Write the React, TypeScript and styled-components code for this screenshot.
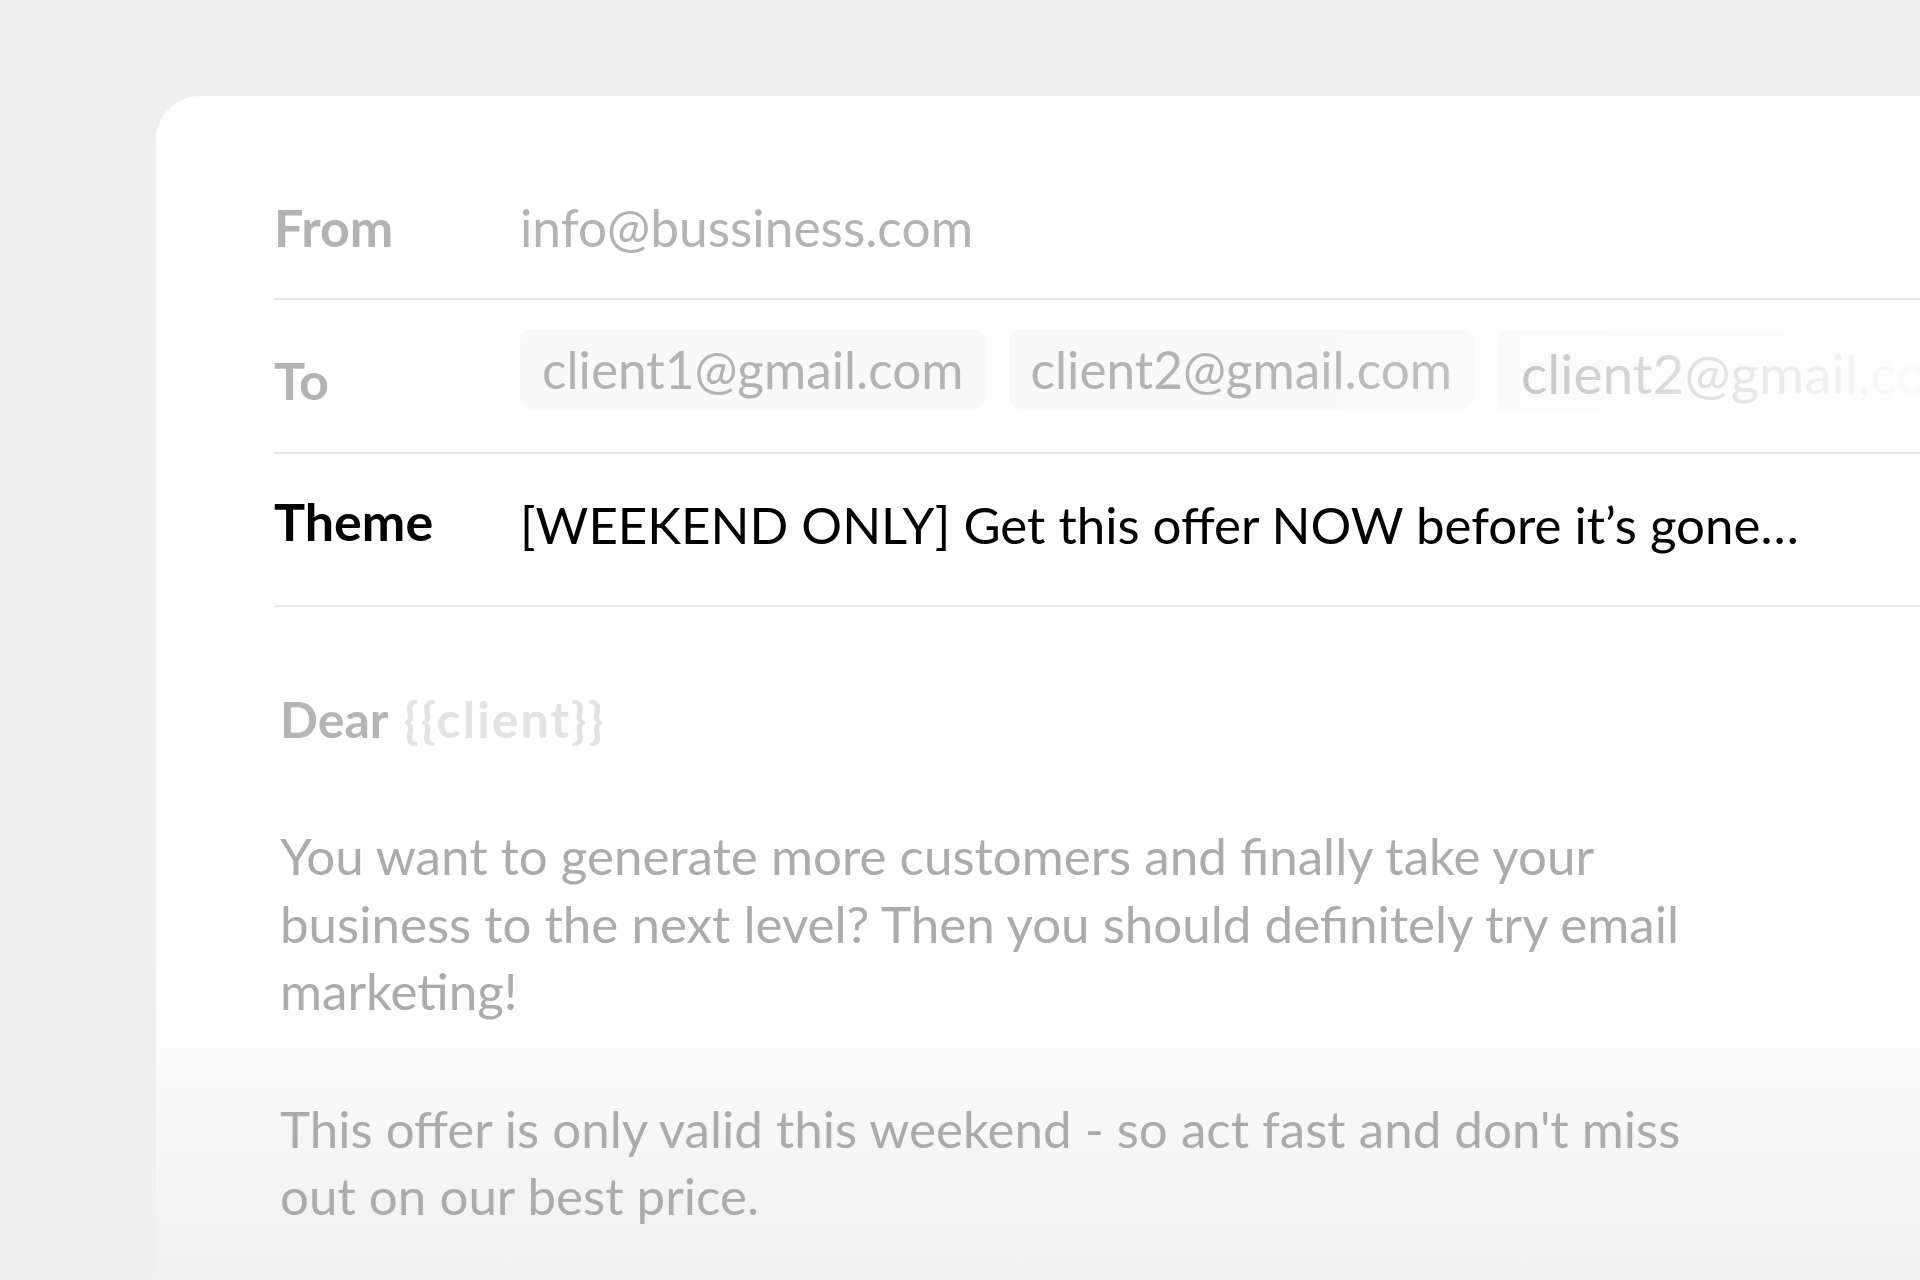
import React from "react";
import styled, { createGlobalStyle } from "styled-components";

const GlobalStyle = createGlobalStyle`
  html, body {
    margin: 0;
    padding: 0;
    background: #efefef;
    width: 1920px;
    height: 1280px;
    overflow: hidden;
  }
  * { box-sizing: border-box; }
`;

const Page = styled.div`
  width: 1920px;
  height: 1280px;
  overflow: hidden;
  background: #efefef;
  padding: 96px 0 0 156px;
  font-family: "Lato", "Liberation Sans", sans-serif;
`;

const Card = styled.div`
  width: 1900px;
  height: 1300px;
  border-radius: 44px 0 0 0;
  background: linear-gradient(180deg, #ffffff 0px, #ffffff 860px, #f0f0f0 1184px);
  padding: 0 0 0 118px;
`;

const Row = styled.div<{ $h: number; $pt: number }>`
  display: grid;
  grid-template-columns: 246px 1fr;
  align-items: start;
  height: ${(p) => p.$h}px;
  padding-top: ${(p) => p.$pt}px;
  border-bottom: 2px solid #e8e8e8;
`;

const Label = styled.div<{ $dark?: boolean; $shift?: number }>`
  font-size: 52px;
  line-height: 60px;
  font-weight: 700;
  color: ${(p) => (p.$dark ? "#000000" : "#b3b3b3")};
  margin-top: ${(p) => p.$shift ?? 0}px;
  white-space: nowrap;
`;

const Value = styled.div<{ $dark?: boolean }>`
  font-size: ${(p) => (p.$dark ? 51 : 51.5)}px;
  line-height: 60px;
  font-weight: 400;
  color: ${(p) => (p.$dark ? "#000000" : "#b3b3b3")};
  white-space: nowrap;
`;

const ChipList = styled.div`
  display: flex;
  align-items: flex-start;
  height: 80px;
  gap: 23px;
  white-space: nowrap;
  overflow: hidden;
  -webkit-mask-image: linear-gradient(
    to right,
    #000 0px,
    #000 720px,
    rgba(0, 0, 0, 0.78) 980px,
    rgba(0, 0, 0, 0.3) 1230px,
    rgba(0, 0, 0, 0.04) 1400px
  );
  mask-image: linear-gradient(
    to right,
    #000 0px,
    #000 720px,
    rgba(0, 0, 0, 0.78) 980px,
    rgba(0, 0, 0, 0.3) 1230px,
    rgba(0, 0, 0, 0.04) 1400px
  );
`;

const Chip = styled.div<{ $big?: boolean }>`
  flex: none;
  height: ${(p) => (p.$big ? 86 : 80)}px;
  line-height: ${(p) => (p.$big ? 86 : 80)}px;
  margin-top: ${(p) => (p.$big ? 1 : 0)}px;
  padding: 0 ${(p) => (p.$big ? 24 : 22)}px;
  border-radius: 12px;
  background: #f9f9f9;
  color: #b3b3b3;
  font-size: ${(p) => (p.$big ? 55 : 51.3)}px;
  font-weight: 400;
`;

const Body = styled.div`
  padding: 79px 0 0 6px;
  width: 1431px;
`;

const Greeting = styled.div`
  font-size: 50px;
  line-height: 67px;
  font-weight: 700;
  color: #b5b5b5;
  margin-bottom: 69px;
  white-space: nowrap;
`;

const Placeholder = styled.span`
  color: #e3e3e3;
  font-weight: 700;
  letter-spacing: 2px;
  margin-left: 4px;
`;

const Paragraph = styled.p`
  margin: 0 0 70px 0;
  font-size: 51.1px;
  line-height: 67.6px;
  font-weight: 400;
  color: #ababab;
`;

export default function App() {
  return (
    <>
      <GlobalStyle />
      <Page>
        <Card>
          <Row $h={204} $pt={101}>
            <Label>From</Label>
            <Value>info@bussiness.com</Value>
          </Row>
          <Row $h={154} $pt={29}>
            <Label $shift={21}>To</Label>
            <ChipList>
              <Chip>client1@gmail.com</Chip>
              <Chip>client2@gmail.com</Chip>
              <Chip $big>client2@gmail,com</Chip>
            </ChipList>
          </Row>
          <Row $h={153} $pt={41}>
            <Label $dark $shift={-4}>
              Theme
            </Label>
            <Value $dark>[WEEKEND ONLY] Get this offer NOW before it’s gone…</Value>
          </Row>
          <Body>
            <Greeting>
              Dear <Placeholder>{"{{client}}"}</Placeholder>
            </Greeting>
            <Paragraph>
              You want to generate more customers and finally take your business to the next
              level? Then you should definitely try email marketing!
            </Paragraph>
            <Paragraph>
              This offer is only valid this weekend - so act fast and don't miss out on our best
              price.
            </Paragraph>
          </Body>
        </Card>
      </Page>
    </>
  );
}
